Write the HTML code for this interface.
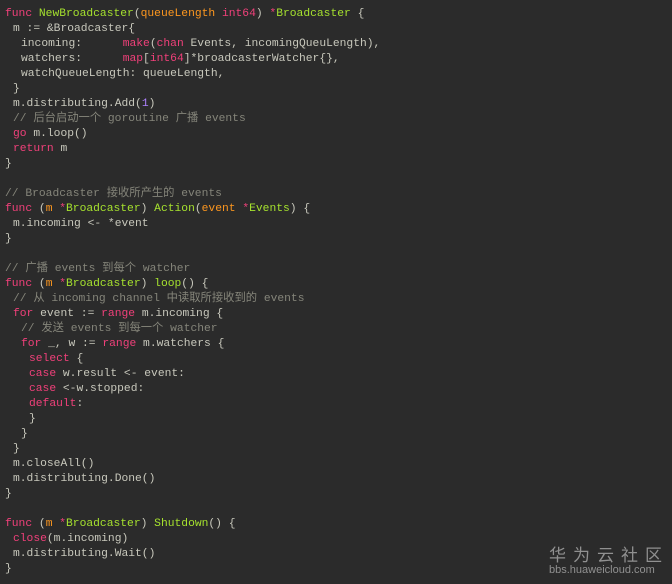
<html><head><style>
body{margin:0;width:672px;height:584px;background:#2b2b2b;overflow:hidden;position:relative;font-family:"Liberation Mono","Noto Sans CJK SC",monospace;font-size:11.3px;color:#c8c8bc}
.l{position:absolute;white-space:pre;line-height:15px;height:15px}
.k{color:#f0407a}.f{color:#a6e22e}.p{color:#fd971f}.c{color:#85857a}.n{color:#ae81ff}
.wm{position:absolute;left:549px;top:541px;color:#909090;font-family:"Noto Sans CJK SC",sans-serif;font-size:17px;letter-spacing:7px}
.wu{position:absolute;left:549px;top:564px;color:#909090;font-family:"Liberation Sans",sans-serif;font-size:11px}
</style></head><body>
<div class="l" style="top:7px;left:5px"><span class="k">func</span> <span class="f">NewBroadcaster</span>(<span class="p">queueLength</span> <span class="k">int64</span>) <span class="k">*</span><span class="f">Broadcaster</span> {</div>
<div class="l" style="top:22px;left:13px">m := &amp;Broadcaster{</div>
<div class="l" style="top:37px;left:21px">incoming:      <span class="k">make</span>(<span class="k">chan</span> Events, incomingQueuLength),</div>
<div class="l" style="top:52px;left:21px">watchers:      <span class="k">map</span>[<span class="k">int64</span>]*broadcasterWatcher{},</div>
<div class="l" style="top:67px;left:21px">watchQueueLength: queueLength,</div>
<div class="l" style="top:82px;left:13px">}</div>
<div class="l" style="top:97px;left:13px">m.distributing.Add(<span class="n">1</span>)</div>
<div class="l c" style="top:112px;left:13px">// 后台启动一个 goroutine 广播 events</div>
<div class="l" style="top:127px;left:13px"><span class="k">go</span> m.loop()</div>
<div class="l" style="top:142px;left:13px"><span class="k">return</span> m</div>
<div class="l" style="top:157px;left:5px">}</div>
<div class="l c" style="top:187px;left:5px">// Broadcaster 接收所产生的 events</div>
<div class="l" style="top:202px;left:5px"><span class="k">func</span> (<span class="p">m</span> <span class="k">*</span><span class="f">Broadcaster</span>) <span class="f">Action</span>(<span class="p">event</span> <span class="k">*</span><span class="f">Events</span>) {</div>
<div class="l" style="top:217px;left:13px">m.incoming &lt;- *event</div>
<div class="l" style="top:232px;left:5px">}</div>
<div class="l c" style="top:262px;left:5px">// 广播 events 到每个 watcher</div>
<div class="l" style="top:277px;left:5px"><span class="k">func</span> (<span class="p">m</span> <span class="k">*</span><span class="f">Broadcaster</span>) <span class="f">loop</span>() {</div>
<div class="l c" style="top:292px;left:13px">// 从 incoming channel 中读取所接收到的 events</div>
<div class="l" style="top:307px;left:13px"><span class="k">for</span> event := <span class="k">range</span> m.incoming {</div>
<div class="l c" style="top:322px;left:21px">// 发送 events 到每一个 watcher</div>
<div class="l" style="top:337px;left:21px"><span class="k">for</span> _, w := <span class="k">range</span> m.watchers {</div>
<div class="l" style="top:352px;left:29px"><span class="k">select</span> {</div>
<div class="l" style="top:367px;left:29px"><span class="k">case</span> w.result &lt;- event:</div>
<div class="l" style="top:382px;left:29px"><span class="k">case</span> &lt;-w.stopped:</div>
<div class="l" style="top:397px;left:29px"><span class="k">default</span>:</div>
<div class="l" style="top:412px;left:29px">}</div>
<div class="l" style="top:427px;left:21px">}</div>
<div class="l" style="top:442px;left:13px">}</div>
<div class="l" style="top:457px;left:13px">m.closeAll()</div>
<div class="l" style="top:472px;left:13px">m.distributing.Done()</div>
<div class="l" style="top:487px;left:5px">}</div>
<div class="l" style="top:517px;left:5px"><span class="k">func</span> (<span class="p">m</span> <span class="k">*</span><span class="f">Broadcaster</span>) <span class="f">Shutdown</span>() {</div>
<div class="l" style="top:532px;left:13px"><span class="k">close</span>(m.incoming)</div>
<div class="l" style="top:547px;left:13px">m.distributing.Wait()</div>
<div class="l" style="top:562px;left:5px">}</div>
<div class="wm">华为云社区</div>
<div class="wu">bbs.huaweicloud.com</div>
</body></html>
